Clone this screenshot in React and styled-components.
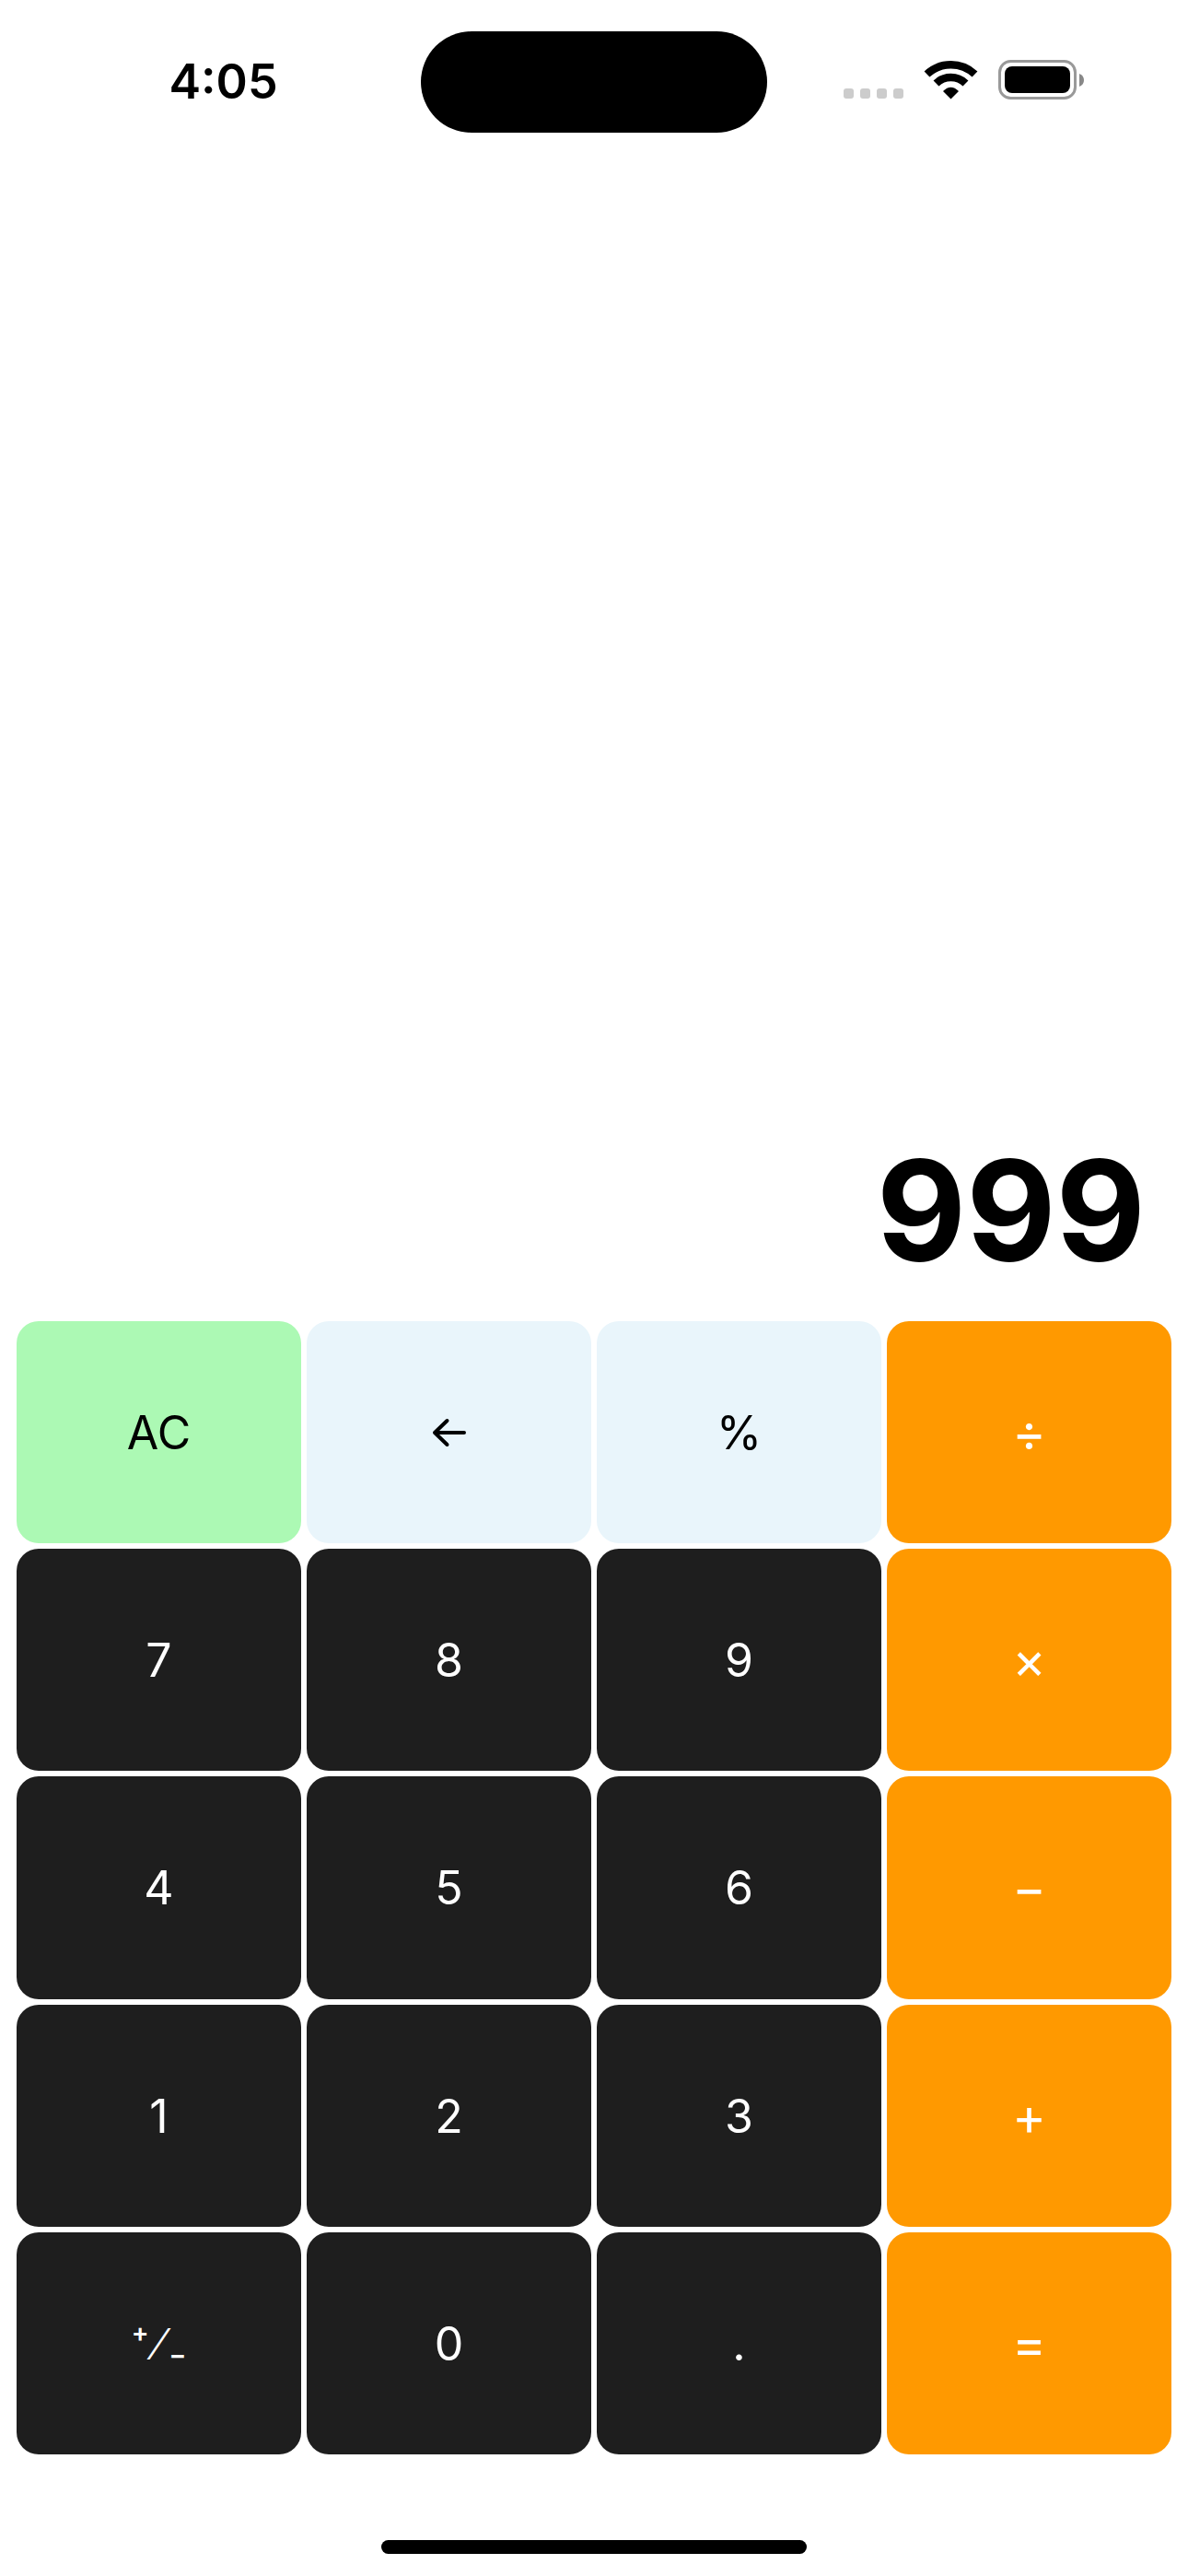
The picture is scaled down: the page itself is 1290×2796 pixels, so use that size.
import React, { useState } from "react";
import styled, { createGlobalStyle, css } from "styled-components";

const GlobalStyle = createGlobalStyle`
  * { box-sizing: border-box; }
  body {
    margin: 0;
    background: #fff;
    color: #000;
    font-family: Inter, "Liberation Sans", sans-serif;
  }
`;

const Screen = styled.main`
  display: flex;
  flex-direction: column;
  min-height: 100vh;
`;

const StatusBar = styled.header`
  display: grid;
  grid-template-columns: 1fr 376px 1fr;
  align-items: center;
  padding-top: 34px;
`;

const Clock = styled.time`
  justify-self: center;
  padding-left: 28px;
  font-size: 52px;
  line-height: 64px;
  font-weight: 600;
`;

const Island = styled.div`
  height: 110px;
  border-radius: 55px;
  background: #000;
`;

const Indicators = styled.div`
  display: flex;
  align-items: center;
  justify-content: flex-end;
  padding-right: 112px;
  padding-bottom: 4px;
`;

const StatusIcon = styled.svg`
  display: block;
  height: 44px;
`;

const Display = styled.output`
  flex: 1;
  display: flex;
  align-items: flex-end;
  justify-content: flex-end;
  padding: 0 46px 30px;
  font-size: 150px;
  line-height: 180px;
  font-weight: 700;
`;

const Keypad = styled.section`
  display: grid;
  grid-template: repeat(5, 1fr) / repeat(4, 1fr);
  gap: 6px;
  height: 44vh;
  padding: 0 18px;
`;

const tones = {
  clear: css`background: #acf9b4; color: #000;`,
  tool: css`background: #e9f5fb; color: #000;`,
  digit: css`background: #1e1e1e; color: #fff;`,
  operator: css`background: #ff9900; color: #fff; font-size: 56px;`,
};

const Key = styled.button`
  display: flex;
  align-items: center;
  justify-content: center;
  border: 0;
  padding: 1px 0 0;
  border-radius: 24px;
  font: 400 50px/60px Inter, "Liberation Sans", sans-serif;
  cursor: pointer;
  ${({ $tone }) => tones[$tone]}
`;

const SignLabel = styled.span`
  display: flex;
  justify-content: center;
  gap: 7px;
  height: 44px;
`;

const Sign = styled.span`
  align-self: ${({ $low }) => ($low ? "flex-end" : "flex-start")};
  font-size: 28px;
  line-height: 20px;
  font-weight: 600;
`;

const Slash = styled.span`
  align-self: center;
  font-size: 46px;
  line-height: 44px;
  font-weight: 300;
`;

const HomeArea = styled.footer`
  display: flex;
  justify-content: center;
  align-items: flex-end;
  height: 132px;
  padding-bottom: 24px;
`;

const HomeIndicator = styled.div`
  width: 462px;
  height: 15px;
  border-radius: 8px;
  background: #000;
`;

const BackArrow = () => (
  <svg width="40" height="34" viewBox="0 0 40 34" fill="none" stroke="currentColor" strokeWidth="4" strokeLinecap="round" strokeLinejoin="round" aria-hidden="true">
    <path d="M36 17H4M17.500 4L4 17L17.500 30" />
  </svg>
);

const PlusMinus = () => (
  <SignLabel>
    <Sign>+</Sign>
    <Slash>⁄</Slash>
    <Sign $low>−</Sign>
  </SignLabel>
);

const keys = [
  ["AC", "clear"], ["←", "tool"], ["%", "tool"], ["÷", "operator"],
  ["7", "digit"], ["8", "digit"], ["9", "digit"], ["×", "operator"],
  ["4", "digit"], ["5", "digit"], ["6", "digit"], ["−", "operator"],
  ["1", "digit"], ["2", "digit"], ["3", "digit"], ["+", "operator"],
  ["±", "digit"], ["0", "digit"], [".", "digit"], ["=", "operator"],
];

const faces = { "←": <BackArrow />, "±": <PlusMinus /> };
const names = { "←": "Backspace", "±": "Change sign" };

export default function App() {
  const [value, setValue] = useState("999");

  const press = (key) => {
    if (key === "AC") setValue("0");
    else if (key === "←") setValue((v) => v.slice(0, -1) || "0");
    else if (key === "±") setValue((v) => String(-Number(v)));
    else if (/^[0-9.]$/.test(key)) setValue((v) => (v === "0" ? key : v + key));
  };

  return (
    <Screen>
      <GlobalStyle />
      <StatusBar>
        <Clock>4:05</Clock>
        <Island />
        <Indicators>
          <StatusIcon width="263" viewBox="0 0 263 44" role="img" aria-label="Wi-Fi on, battery full">
            <g fill="#ccc">
              <rect x="1" y="31" width="11" height="11" rx="3" />
              <rect x="19" y="31" width="11" height="11" rx="3" />
              <rect x="37" y="31" width="11" height="11" rx="3" />
              <rect x="55" y="31" width="11" height="11" rx="3" />
            </g>
            <g fill="none" stroke="#000">
              <path d="M91.500 15.500A38 38 0 0 1 143.500 15.500" strokeWidth="8.500" />
              <path d="M101.500 25.500A23 23 0 0 1 133.500 25.500" strokeWidth="8.500" />
            </g>
            <path d="M109 34Q117.500 25.500 126 34L117.500 42.500Z" />
            <rect x="170.500" y="1.500" width="82" height="40" rx="12" fill="none" stroke="#999" strokeWidth="3" />
            <rect x="176" y="7" width="71" height="29" rx="8" />
            <path d="M257 15Q262 17 262 22T257 29Z" fill="#888" />
          </StatusIcon>
        </Indicators>
      </StatusBar>
      <Display>{value}</Display>
      <Keypad aria-label="Calculator keys">
        {keys.map(([label, tone]) => (
          <Key key={label} type="button" $tone={tone} onClick={() => press(label)} aria-label={names[label]}>
            {faces[label] ?? label}
          </Key>
        ))}
      </Keypad>
      <HomeArea>
        <HomeIndicator />
      </HomeArea>
    </Screen>
  );
}
